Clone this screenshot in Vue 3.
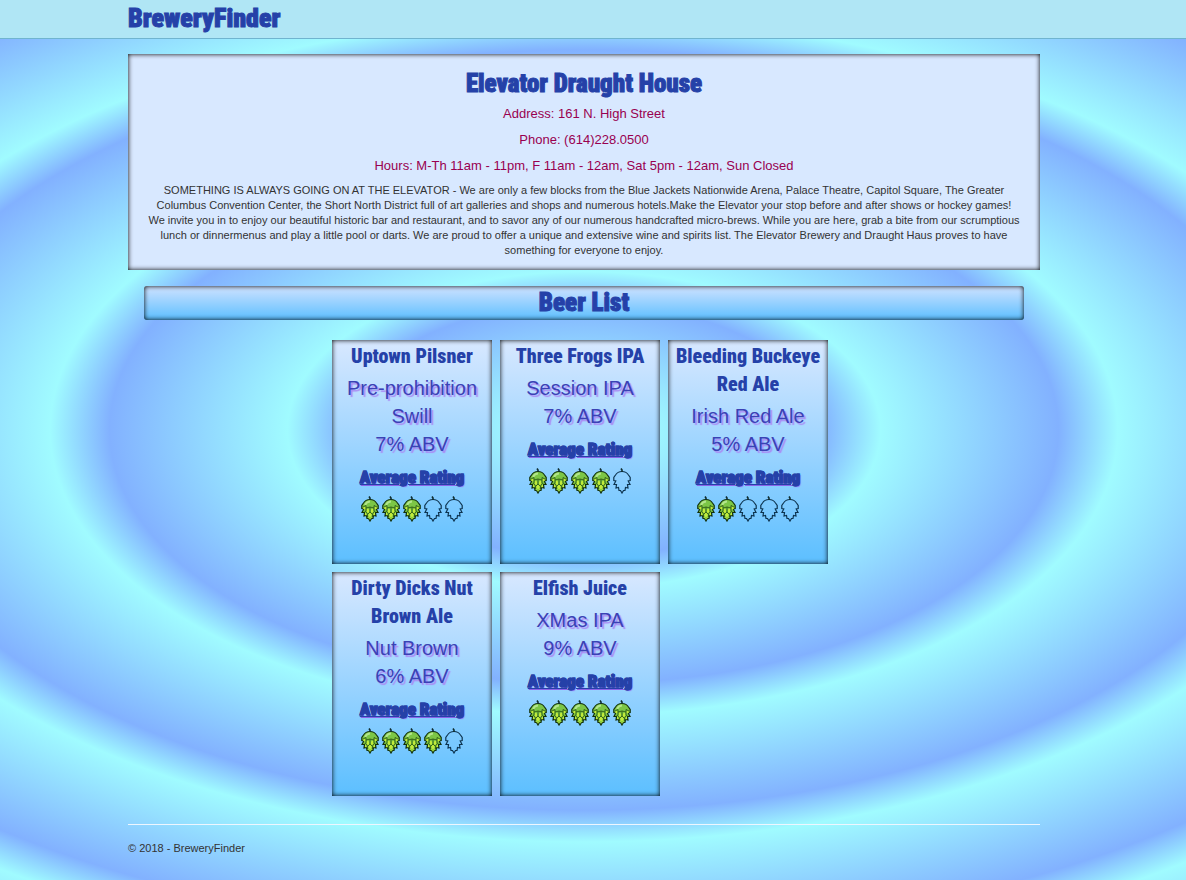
<script setup>
const brewery = {
  name: 'Elevator Draught House',
  address: '161 N. High Street',
  phone: '(614)228.0500',
  hours: 'M-Th 11am - 11pm, F 11am - 12am, Sat 5pm - 12am, Sun Closed',
  about:
    'SOMETHING IS ALWAYS GOING ON AT THE ELEVATOR - We are only a few blocks from the Blue Jackets Nationwide Arena, Palace Theatre, Capitol Square, The Greater Columbus Convention Center, the Short North District full of art galleries and shops and numerous hotels.Make the Elevator your stop before and after shows or hockey games! We invite you in to enjoy our beautiful historic bar and restaurant, and to savor any of our numerous handcrafted micro-brews. While you are here, grab a bite from our scrumptious lunch or dinnermenus and play a little pool or darts. We are proud to offer a unique and extensive wine and spirits list. The Elevator Brewery and Draught Haus proves to have something for everyone to enjoy.'
}

const beers = [
  { name: 'Uptown Pilsner', style: 'Pre-prohibition Swill', abv: 7, rating: 3 },
  { name: 'Three Frogs IPA', style: 'Session IPA', abv: 7, rating: 4 },
  { name: 'Bleeding Buckeye Red Ale', style: 'Irish Red Ale', abv: 5, rating: 2 },
  { name: 'Dirty Dicks Nut Brown Ale', style: 'Nut Brown', abv: 6, rating: 4 },
  { name: 'Elfish Juice', style: 'XMas IPA', abv: 9, rating: 5 }
]

const cone =
  'M9 3.5C6 3.500 4 4.500 2.500 7L.8 9.500V12.500L2.800 13 1 16.500 3.500 16.500 3 20 5.500 19.500 6 22.500 7.500 22.500 9 25 10.500 22.500 12 22.500 12.500 19.500 15 20 14.500 16.500 17 16.500 15.200 13 17.200 12.500V9.500L15.500 7C14 4.500 12 3.500 9 3.500Z'
</script>

<template>
  <div class="page">
    <header class="nav">
      <div class="container"><a class="brand" href="#">BreweryFinder</a></div>
    </header>

    <main class="container">
      <section class="info">
        <h1>{{ brewery.name }}</h1>
        <p class="fact">Address: {{ brewery.address }}</p>
        <p class="fact">Phone: {{ brewery.phone }}</p>
        <p class="fact">Hours: {{ brewery.hours }}</p>
        <p class="about">{{ brewery.about }}</p>
      </section>

      <h2 class="list-title">Beer List</h2>

      <div class="beers">
        <article v-for="beer in beers" :key="beer.name" class="beer">
          <h3><a href="#">{{ beer.name }}</a></h3>
          <p class="detail">{{ beer.style }}<br />{{ beer.abv }}% ABV</p>
          <h4>Average Rating</h4>
          <div class="hops" role="img" :aria-label="`${beer.rating} of 5`">
            <svg v-for="n in 5" :key="n" class="hop" viewBox="0 0 18 26">
              <g v-if="n <= beer.rating">
                <path class="leaf" :d="cone" />
                <path class="shine" d="M4 9C5 7 6.500 5.500 9 5.500" />
                <path class="petal" d="M2.500 10.500l2 .5v2l-1 .500-1.500-1ZM15.500 10.500l-2 .5v2l1 .500 1.500-1ZM6 12.500l2 1v2.500l-1 1.500-1.500-1.500ZM12 12.500l-2 1v2.500l1 1.500 1.500-1.500ZM4 16.500l1.500 1v2l-1.500-.500ZM14 16.500l-1.500 1v2l1.500-.500ZM9 16.500l1.500 1.500v2L9 21.500 7.500 20v-2ZM7 20.500l1.500 1.500v1.500L7.500 22ZM11 20.500L9.500 22v1.500l1-1.500Z" />
                <path class="vein" d="M2 11l3-1.500V15l-1.500 1M16 11l-3-1.500V15l1.500 1M5 12l4-1 4 1M9 11v5M5 15.500l1.500 2.500v3M13 15.500l-1.500 2.500v3M7 18l2-2 2 2" />
              </g>
              <path v-else class="outline" :d="cone" />
              <path class="stem" d="M9 4V2L8 .5" />
            </svg>
          </div>
        </article>
      </div>

      <hr />
      <footer>&copy; 2018 - BreweryFinder</footer>
    </main>
  </div>
</template>

<style>
body {
  margin: 0;
}
</style>

<style scoped>
.page {
  min-height: 100vh;
  box-sizing: border-box;
  color: #333;
  font: 11px/15px 'Liberation Sans', Arial, sans-serif;
  background: repeating-radial-gradient(
    ellipse 50vw 36vh at calc(50% - 9px) calc(50vh - 10px),
    #82b1ff 0%,
    #a0fbff 10%,
    #82b1ff 40%
  );
}
.nav {
  height: 38px;
  background: #b0e6f5;
  border-bottom: 1px solid #70b4cf;
}
.container {
  max-width: 912px;
  margin: 0 auto;
  position: relative;
  right: 9px;
}
.brand,
h1,
h2,
h3,
h4 {
  font-family: 'Roboto Condensed', Impact, sans-serif;
  font-weight: 900;
  color: #2541a8;
  margin: 0;
}
.brand,
h1,
h2,
h4 {
  -webkit-text-stroke: 1px #2541a8;
}
.brand {
  display: inline-block;
  font-size: 26px;
  line-height: 36px;
  text-decoration: none;
}
.info {
  margin-top: 15px;
  padding: 16px 12px 12px;
  background: #d8e8ff;
  box-shadow: inset 0 0 5px #000;
  text-align: center;
}
h1 {
  margin-bottom: 6px;
  font-size: 25px;
  line-height: 28px;
}
.fact {
  margin: 0 0 7px;
  font-size: 13px;
  line-height: 19px;
  color: #990050;
}
.about {
  margin: 8px 0 0;
  padding: 0 8px;
}
.list-title {
  margin: 16px 16px 20px;
  border-radius: 3px;
  font-size: 25px;
  line-height: 34px;
  text-align: center;
  background: linear-gradient(#d0e2ff, #5cbfff);
  box-shadow: inset 0 0 5px #000;
}
.beers {
  display: flex;
  flex-wrap: wrap;
  gap: 8px;
  max-width: 496px;
  margin: 0 auto;
  padding-right: 8px;
}
.beer {
  width: 160px;
  min-height: 224px;
  box-sizing: border-box;
  padding: 2px 4px;
  text-align: center;
  background: linear-gradient(#d8e8ff, #5cbfff);
  box-shadow: inset 0 0 5px #000;
}
h3 {
  margin: 0 0 4px;
  font-size: 20px;
  line-height: 28px;
}
h3 a {
  color: inherit;
  text-decoration: none;
}
.detail {
  margin: 0;
  font-size: 20px;
  line-height: 28px;
  color: #3b41b5;
  text-shadow: 2px 2px 1px #a98cf5;
}
h4 {
  margin-top: 9px;
  font-size: 17px;
  line-height: 20px;
  text-decoration: underline;
  text-shadow: 1px 1px 1px #8a62e8;
}
.hops {
  display: flex;
  justify-content: center;
  gap: 3px;
  margin-top: 9px;
}
.hop {
  width: 18px;
  height: 26px;
}
.leaf {
  fill: #7cc646;
  stroke: #12300c;
  stroke-width: 1.2;
}
.shine {
  fill: none;
  stroke: #b4e58c;
  stroke-width: 2;
}
.petal {
  fill: #c4ec3a;
}
.vein {
  fill: none;
  stroke: #27500f;
  stroke-width: 0.8;
}
.outline {
  fill: none;
  stroke: #0d3450;
  stroke-width: 1.2;
}
.stem {
  fill: none;
  stroke: #0f2d30;
  stroke-width: 1.6;
}
hr {
  margin: 28px 0 16px;
  border: 0;
  border-top: 1px solid #eef6ff;
}
footer {
  padding-bottom: 16px;
}
</style>
